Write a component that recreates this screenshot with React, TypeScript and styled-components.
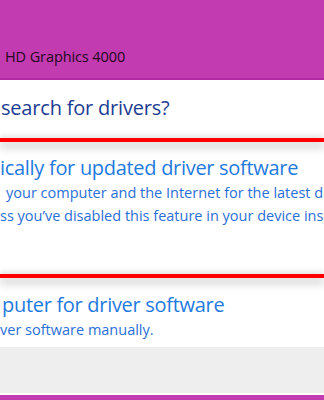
import React from "react";
import styled, { createGlobalStyle } from "styled-components";

const GlobalStyle = createGlobalStyle`
  html, body {
    margin: 0;
    padding: 0;
    background: #ffffff;
  }
  body {
    font-family: "Open Sans", "Noto Sans", sans-serif;
  }
`;

const Window = styled.div`
  width: 324px;
  height: 400px;
  overflow: hidden;
  display: flex;
  flex-direction: column;
  background: #ffffff;
`;

const Header = styled.div`
  height: 80px;
  flex-shrink: 0;
  background: #c23bb0;
  border-bottom: 2px solid #b22ba2;
  display: flex;
  align-items: flex-end;
  padding: 0 0 12px 5px;
  box-sizing: border-box;
`;

const DeviceName = styled.div`
  font-size: 14.5px;
  color: #240820;
  white-space: nowrap;
  letter-spacing: -0.1px;
`;

const Body = styled.div`
  flex: 1;
  display: flex;
  flex-direction: column;
  overflow: hidden;
`;

const Question = styled.div`
  padding: 14px 0 0 1px;
  height: 58px;
  flex-shrink: 0;
  box-sizing: border-box;
  font-size: 20px;
  color: #1c3c93;
  white-space: nowrap;
  letter-spacing: -0.2px;
`;

const Divider = styled.div`
  height: 4px;
  flex-shrink: 0;
  background: #ff0000;
  box-shadow: 0 5px 8px rgba(0, 0, 0, 0.28), 0 -3px 5px rgba(0, 0, 0, 0.1);
  position: relative;
  z-index: 1;
`;

const Option = styled.div<{ $height: number; $top: number }>`
  height: ${(p) => p.$height}px;
  flex-shrink: 0;
  box-sizing: border-box;
  padding-top: ${(p) => p.$top}px;
  white-space: nowrap;
  overflow: hidden;
`;

const OptionTitle = styled.div<{ $indent: number }>`
  font-size: 20px;
  color: #1e7ae0;
  padding-left: ${(p) => p.$indent}px;
  letter-spacing: -0.3px;
  line-height: 26px;
`;

const OptionText = styled.div<{ $indent: number }>`
  font-size: 14.5px;
  color: #2a6fd6;
  padding-left: ${(p) => p.$indent}px;
  line-height: 23px;
  overflow: hidden;
`;

const Footer = styled.div`
  height: 46px;
  flex-shrink: 0;
  background: #eeeeee;
  border-bottom: 2px solid #ffffff;
`;

const Strip = styled.div`
  height: 5px;
  flex-shrink: 0;
  background: #c23bb0;
`;

export default function App() {
  return (
    <>
      <GlobalStyle />
      <Window>
        <Header>
          <DeviceName>HD Graphics 4000</DeviceName>
        </Header>
        <Body>
          <Question>search for drivers?</Question>
          <Divider />
          <Option $height={132} $top={13}>
            <OptionTitle $indent={0}>ically for updated driver software</OptionTitle>
            <OptionText $indent={6}>your computer and the Internet for the latest dr</OptionText>
            <OptionText $indent={0}>ss you’ve disabled this feature in your device ins</OptionText>
          </Option>
          <Divider />
          <Option $height={67} $top={14}>
            <OptionTitle $indent={2}>puter for driver software</OptionTitle>
            <OptionText $indent={0}>ver software manually.</OptionText>
          </Option>
        </Body>
        <Footer />
        <Strip />
      </Window>
    </>
  );
}
